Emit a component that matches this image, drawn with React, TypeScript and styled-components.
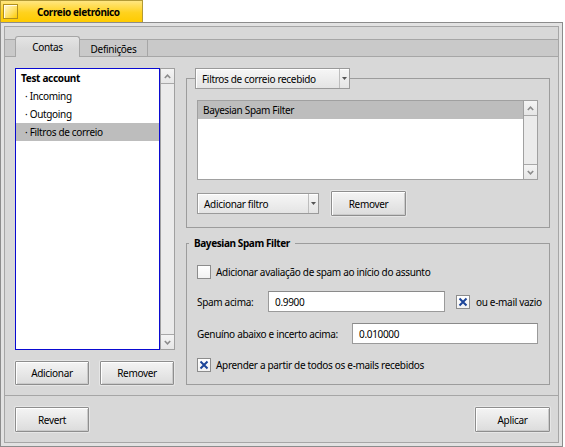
import React from 'react';
import styled, { createGlobalStyle } from 'styled-components';

const Global = createGlobalStyle`
  html, body { margin: 0; padding: 0; background: #ffffff; }
  body {
    font-family: "Noto Sans", "DejaVu Sans", sans-serif;
    font-size: 10px;
    letter-spacing: -0.32px;
    color: #000;
  }
  * { box-sizing: border-box; }
`;

const Window = styled.div`
  width: 563px;
  display: flex;
  flex-direction: column;
`;

const TitleTab = styled.div`
  width: 143px;
  height: 22px;
  display: flex;
  align-items: center;
  padding-left: 2px;
  border: 1px solid #b39a35;
  border-bottom: none;
  background: linear-gradient(#ffe680, #ffd21e 55%, #ffcb00);
`;

const CloseBox = styled.span`
  width: 15px;
  height: 15px;
  border: 1px solid #b08f1c;
  background: linear-gradient(135deg, #fff8d8, #ffe060 60%, #ffcb00);
  box-shadow: inset 1px 1px 0 #fffbe8;
`;

const TitleText = styled.span`
  margin-left: 19px;
  font-weight: bold;
  letter-spacing: -0.4px;
`;

const Frame = styled.div`
  height: 425px;
  border: 1px solid #8c8c8c;
  background: #e2e2e2;
  padding: 3px;
`;

const Inner = styled.div`
  height: 100%;
  border: 1px solid #a6a6a6;
  background: #d8d8d8;
  display: flex;
  flex-direction: column;
`;

const TabBar = styled.div`
  margin-top: 12px;
  height: 18px;
  display: flex;
  padding-left: 10px;
  background: #c9c9c9;
  border-top: 1px solid #a6a6a6;
  border-bottom: 1px solid #a6a6a6;
`;

const Tab = styled.div<{ $active?: boolean; $w: number }>`
  width: ${p => p.$w}px;
  display: flex;
  align-items: center;
  justify-content: center;
  white-space: nowrap;
  ${p => p.$active
    ? `
    height: 21px;
    margin-top: -4px;
    margin-bottom: -1px;
    border: 1px solid #a6a6a6;
    border-bottom: none;
    border-radius: 3px 3px 0 0;
    background: linear-gradient(#e4e4e4, #d8d8d8 60%);
    `
    : `
    height: 16px;
    border-right: 1px solid #a6a6a6;
    padding-top: 1px;
    `}
`;

const Page = styled.div`
  height: 339px;
  border-bottom: 1px solid #a6a6a6;
  display: flex;
  gap: 11px;
  padding: 11px 0 0 10px;
`;

const LeftCol = styled.div`
  width: 160px;
  display: flex;
  flex-direction: column;
`;

const ListArea = styled.div<{ $h: number }>`
  height: ${p => p.$h}px;
  display: flex;
`;

const AccountList = styled.div`
  flex: 1;
  border: 1px solid #0a0ad2;
  background: #fff;
  display: flex;
  flex-direction: column;
`;

const FilterList = styled.div`
  flex: 1;
  border: 1px solid #a0a0a0;
  border-right: none;
  background: #fff;
  display: flex;
  flex-direction: column;
`;

const ListRow = styled.div<{ $bold?: boolean; $indent?: boolean; $selected?: boolean }>`
  height: 18px;
  display: flex;
  align-items: center;
  white-space: nowrap;
  padding-left: ${p => (p.$indent ? 9 : 5)}px;
  font-weight: ${p => (p.$bold ? 'bold' : 'normal')};
  background: ${p => (p.$selected ? '#bdbdbd' : 'transparent')};
`;

const Scroll = styled.div`
  width: 15px;
  border: 1px solid #a0a0a0;
  background: #ececec;
  display: flex;
  flex-direction: column;
`;

const ScrollBtn = styled.div<{ $down?: boolean }>`
  height: 15px;
  display: flex;
  align-items: center;
  justify-content: center;
  background: linear-gradient(#f4f4f4, #e6e6e6);
  ${p => (p.$down ? 'border-top: 1px solid #a8a8a8;' : 'border-bottom: 1px solid #a8a8a8;')}
`;

const ScrollTrack = styled.div`
  flex: 1;
  background: #ebebeb;
`;

const ButtonRow = styled.div<{ $mt: number; $gap: number }>`
  display: flex;
  align-items: center;
  margin-top: ${p => p.$mt}px;
  gap: ${p => p.$gap}px;
`;

const Button = styled.button<{ $w: number; $h?: number }>`
  width: ${p => p.$w}px;
  height: ${p => p.$h ?? 24}px;
  padding: 0;
  font: inherit;
  letter-spacing: inherit;
  color: #000;
  border: 1px solid #8e8e8e;
  border-radius: 1px;
  background: linear-gradient(#f4f4f4, #dcdcdc);
  box-shadow: inset 1px 1px 0 #ffffff, inset -1px -1px 0 #cacaca, 0 0 0 1px #e6e6e6;
`;

const RightCol = styled.div`
  width: 364px;
  display: flex;
  flex-direction: column;
`;

const Group = styled.fieldset<{ $mt?: number; $pt: number; $pb: number }>`
  margin: ${p => p.$mt ?? 0}px 0 0 0;
  min-width: 0;
  padding: ${p => p.$pt}px 11px ${p => p.$pb}px 10px;
  border: 1px solid #9c9c9c;
  display: flex;
  flex-direction: column;
`;

const MenuLegend = styled.legend`
  padding: 0;
  margin-left: -2px;
`;

const TextLegend = styled.legend`
  padding: 0 5px;
  margin-left: -8px;
  line-height: 14px;
  font-weight: bold;
  letter-spacing: -0.4px;
`;

const MenuField = styled.div<{ $w: number }>`
  width: ${p => p.$w}px;
  height: 21px;
  display: flex;
  border: 1px solid #9a9a9a;
  background: linear-gradient(#f6f6f6, #e4e4e4);
  box-shadow: inset 1px 1px 0 #ffffff;
`;

const MenuLabel = styled.span`
  flex: 1;
  display: flex;
  align-items: center;
  padding-left: 6px;
  white-space: nowrap;
`;

const MenuArrow = styled.span`
  width: 10px;
  display: flex;
  align-items: center;
  justify-content: center;
  border-left: 1px solid #bdbdbd;
`;

const FormRow = styled.div<{ $mt?: number; $h: number }>`
  display: flex;
  align-items: center;
  height: ${p => p.$h}px;
  margin-top: ${p => p.$mt ?? 0}px;
  white-space: nowrap;
`;

const FieldLabel = styled.span<{ $w: number }>`
  width: ${p => p.$w}px;
  flex: none;
`;

const TextInput = styled.input<{ $w: number }>`
  width: ${p => p.$w}px;
  height: 21px;
  flex: none;
  padding: 0 0 0 6px;
  font: inherit;
  letter-spacing: inherit;
  color: #000;
  background: #fff;
  border: 1px solid #9a9a9a;
  border-top-color: #8a8a8a;
  outline: none;
`;

const CheckBox = styled.span<{ $ml?: number }>`
  width: 14px;
  height: 14px;
  flex: none;
  margin-left: ${p => p.$ml ?? 0}px;
  display: flex;
  align-items: center;
  justify-content: center;
  border: 1px solid #8c8c8c;
  background: linear-gradient(#ffffff, #f2f2f2);
`;

const CheckLabel = styled.span<{ $ml: number }>`
  margin-left: ${p => p.$ml}px;
  white-space: nowrap;
`;

const BottomBar = styled.div`
  flex: 1;
  display: flex;
  justify-content: space-between;
  align-items: flex-start;
  padding: 11px 8px 0 10px;
`;

const Chevron = ({ down }: { down?: boolean }) => (
  <svg width="7" height="5" viewBox="0 0 7 5">
    <polyline
      points={down ? '0.8,1 3.5,3.8 6.2,1' : '0.8,4 3.5,1.2 6.2,4'}
      fill="none"
      stroke="#8c8c8c"
      strokeWidth="1.6"
    />
  </svg>
);

const DownTri = () => (
  <svg width="5" height="3" viewBox="0 0 5 3">
    <polygon points="0,0 5,0 2.5,3" fill="#555" />
  </svg>
);

const Check = ({ on, ml }: { on?: boolean; ml?: number }) => (
  <CheckBox $ml={ml}>
    {on && (
      <svg width="10" height="10" viewBox="0 0 10 10">
        <path d="M1.5 1.5 L8.5 8.5 M8.5 1.5 L1.5 8.5" stroke="#1d4599" strokeWidth="2" fill="none" />
      </svg>
    )}
  </CheckBox>
);

const ScrollBar = () => (
  <Scroll>
    <ScrollBtn>
      <Chevron />
    </ScrollBtn>
    <ScrollTrack />
    <ScrollBtn $down>
      <Chevron down />
    </ScrollBtn>
  </Scroll>
);

export default function App() {
  return (
    <>
      <Global />
      <Window>
        <TitleTab>
          <CloseBox />
          <TitleText>Correio eletrónico</TitleText>
        </TitleTab>
        <Frame>
          <Inner>
            <TabBar>
              <Tab $active $w={65}>Contas</Tab>
              <Tab $w={68}>Definições</Tab>
            </TabBar>
            <Page>
              <LeftCol>
                <ListArea $h={282}>
                  <AccountList>
                    <ListRow $bold>Test account</ListRow>
                    <ListRow $indent>· Incoming</ListRow>
                    <ListRow $indent>· Outgoing</ListRow>
                    <ListRow $indent $selected>· Filtros de correio</ListRow>
                  </AccountList>
                  <ScrollBar />
                </ListArea>
                <ButtonRow $mt={11} $gap={11}>
                  <Button $w={74}>Adicionar</Button>
                  <Button $w={74}>Remover</Button>
                </ButtonRow>
              </LeftCol>
              <RightCol>
                <Group $pt={11} $pb={11}>
                  <MenuLegend>
                    <MenuField $w={155}>
                      <MenuLabel>Filtros de correio recebido</MenuLabel>
                      <MenuArrow>
                        <DownTri />
                      </MenuArrow>
                    </MenuField>
                  </MenuLegend>
                  <ListArea $h={80}>
                    <FilterList>
                      <ListRow $selected>Bayesian Spam Filter</ListRow>
                    </FilterList>
                    <ScrollBar />
                  </ListArea>
                  <ButtonRow $mt={11} $gap={12}>
                    <MenuField $w={122}>
                      <MenuLabel>Adicionar filtro</MenuLabel>
                      <MenuArrow>
                        <DownTri />
                      </MenuArrow>
                    </MenuField>
                    <Button $w={75} $h={25}>Remover</Button>
                  </ButtonRow>
                </Group>
                <Group $mt={8} $pt={14} $pb={12}>
                  <TextLegend>Bayesian Spam Filter</TextLegend>
                  <FormRow $h={15}>
                    <Check />
                    <CheckLabel $ml={5}>Adicionar avaliação de spam ao início do assunto</CheckLabel>
                  </FormRow>
                  <FormRow $mt={12} $h={21}>
                    <FieldLabel $w={71}>Spam acima:</FieldLabel>
                    <TextInput $w={177} readOnly value="0.9900" />
                    <Check on ml={11} />
                    <CheckLabel $ml={6}>ou e-mail vazio</CheckLabel>
                  </FormRow>
                  <FormRow $mt={11} $h={21}>
                    <FieldLabel $w={155}>Genuíno abaixo e incerto acima:</FieldLabel>
                    <TextInput $w={186} readOnly value="0.010000" />
                  </FormRow>
                  <FormRow $mt={14} $h={14}>
                    <Check on />
                    <CheckLabel $ml={5}>Aprender a partir de todos os e-mails recebidos</CheckLabel>
                  </FormRow>
                </Group>
              </RightCol>
            </Page>
            <BottomBar>
              <Button $w={74} $h={25}>Revert</Button>
              <Button $w={75} $h={25}>Aplicar</Button>
            </BottomBar>
          </Inner>
        </Frame>
      </Window>
    </>
  );
}
